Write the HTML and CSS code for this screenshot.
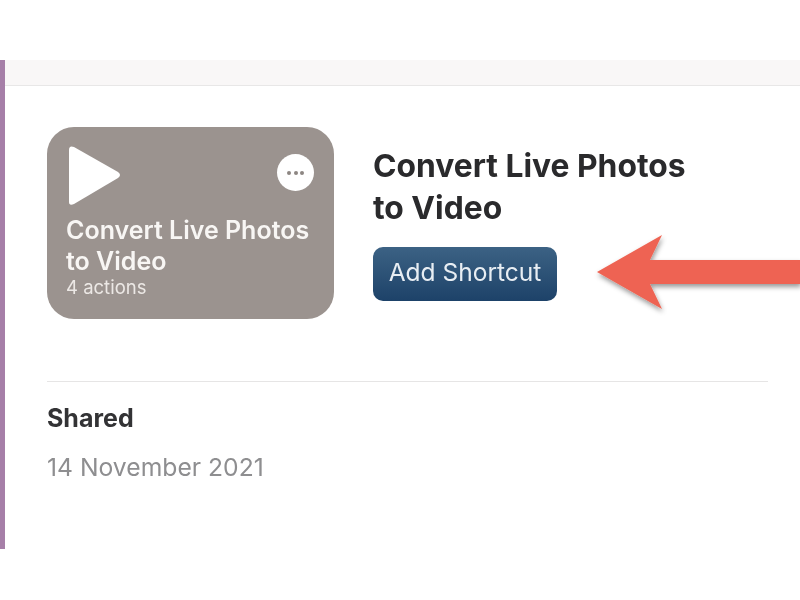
FILE: index.html
```html
<!DOCTYPE html>
<html lang="en">
<head>
<meta charset="utf-8">
<title>Convert Live Photos to Video</title>
<link rel="stylesheet" href="styles.css">
</head>
<body>
<div class="window">
  <div class="sidebar"></div>
  <main class="main">
    <div class="toolbar"></div>
    <div class="content">
      <section class="hero">
        <div class="card">
          <div class="card-top">
            <svg class="play" width="54" height="60" viewBox="0 0 54 60" aria-hidden="true">
              <path d="M2 4 Q2 -1 7 1 L51 26 Q55 29 51 32 L7 58 Q2 60 2 56 Z" fill="#fff"/>
            </svg>
            <span class="more"><i></i><i></i><i></i></span>
          </div>
          <div class="card-title">Convert Live Photos<br>to Video</div>
          <div class="card-sub">4 actions</div>
        </div>
        <div class="info">
          <h1 class="title">Convert Live Photos<br>to Video</h1>
          <button class="add">Add Shortcut</button>
        </div>
      </section>
      <hr class="rule">
      <h2 class="label">Shared</h2>
      <p class="date">14 November 2021</p>
    </div>
  </main>
</div>
<svg class="arrow" width="203" height="80" viewBox="597 234 203 80" aria-hidden="true">
  <defs>
    <filter id="arrow-shadow" x="-5%" y="-20%" width="110%" height="150%">
      <feDropShadow dx="1" dy="3" stdDeviation="2.5" flood-color="#000" flood-opacity="0.4"/>
    </filter>
  </defs>
  <path d="M597 272 L662 235 L650 260 L800 260 L800 284 L650 284 L662 309 Z" fill="#ee6453" filter="url(#arrow-shadow)"/>
</svg>
</body>
</html>
```
FILE: styles.css
```css
* { box-sizing: border-box; }
html, body { margin: 0; height: 100%; background: #fff; }
body {
  position: relative;
  width: 800px;
  height: 600px;
  overflow: hidden;
  padding-top: 60px;
  font-family: Inter, "Liberation Sans", sans-serif;
}
.window { display: flex; height: 489px; }
.sidebar { width: 5px; background: #a67fa8; }
.main { flex: 1; display: flex; flex-direction: column; }
.toolbar { height: 26px; background: #f9f7f7; border-bottom: 1px solid #e8e7e7; }
.content { padding: 41px 32px 0 42px; filter: blur(0.5px); }
.hero { display: flex; gap: 39px; }
.card {
  width: 287px;
  height: 192px;
  border-radius: 27px;
  background: #9b938f;
  padding: 19px 20px 0 19px;
  color: #fff;
}
.card-top { display: flex; justify-content: space-between; align-items: flex-start; height: 61px; }
.play { display: block; margin-left: 1px; }
.more {
  width: 37px;
  height: 37px;
  border-radius: 50%;
  background: #fff;
  margin-top: 8px;
  display: flex;
  align-items: center;
  justify-content: center;
  gap: 2.5px;
}
.more i { width: 4px; height: 4px; border-radius: 50%; background: #8d8682; }
.card-title { margin-top: 8px; font-size: 25px; line-height: 31px; font-weight: 600; color: #f8f6f4; }
.card-sub { font-size: 18.5px; line-height: 21px; color: #ece8e5; }
.info { padding-top: 18px; }
.title { margin: 0; font-size: 31.8px; line-height: 42px; font-weight: 700; color: #2a2a2c; }
.add {
  display: block;
  margin-top: 18px;
  width: 184px;
  height: 54px;
  border: 0;
  border-radius: 10px;
  background: linear-gradient(#3c6284, #1d4269);
  color: #e8eef3;
  font-family: inherit;
  font-size: 24.5px;
  line-height: 50px;
  font-weight: 400;
  padding: 0 0 4px;
}
.rule { margin: 62px 0 0; border: 0; border-top: 1px solid #e6e5e5; }
.label { margin: 21px 0 0; font-size: 25px; line-height: 30px; font-weight: 700; color: #333335; }
.date { margin: 19px 0 0; font-size: 24.7px; line-height: 30px; color: #8e8e90; }
.arrow { position: absolute; left: 597px; top: 234px; overflow: visible; }
```
